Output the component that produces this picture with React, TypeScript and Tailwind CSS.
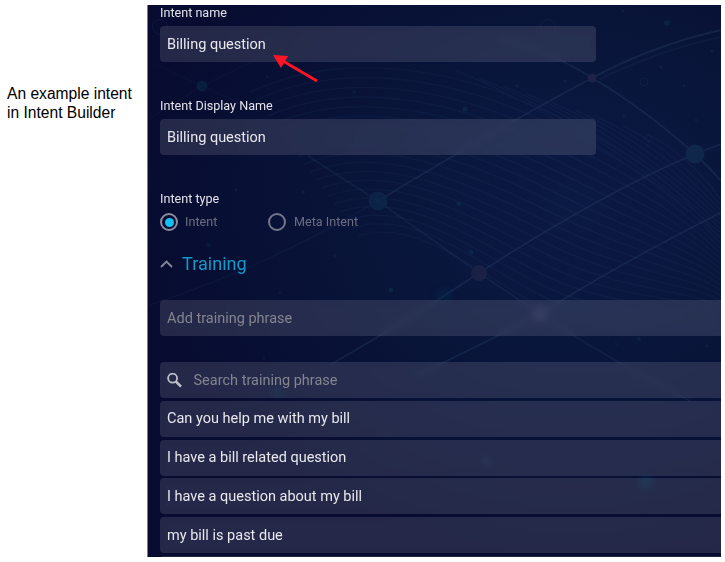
import React from 'react';

const waves = Array.from({ length: 19 }, (_, i) => i);

const dots: [number, number, number, string][] = [
  [667, 23, 3, '#0d5068'], [465, 109, 2.5, '#12506c'], [354, 92, 2, '#0d4058'],
  [661, 67, 1.5, '#284060'], [684, 86, 1.5, '#1e3c64'], [565, 81, 1.5, '#1e3c64'],
  [517, 86, 1.7, '#1e3c64'], [623, 11, 1.5, '#243a60'], [459, 204, 2.5, '#10506c'],
  [471, 252, 2.5, '#10506c'], [391, 290, 2.3, '#1c5570'], [209, 245, 2.3, '#0e3f5c'],
  [303, 192, 2, '#0e3f5c'], [236, 190, 1.7, '#0e3f5c'], [335, 256, 1.5, '#183460'],
  [280, 293, 1.5, '#183460'], [639, 339, 2, '#10506c'], [616, 344, 1.3, '#183f60'],
  [707, 346, 1.3, '#183f60'], [696, 120, 1.5, '#1c3d64'], [624, 116, 1.3, '#243d64'],
  [712, 51, 1.5, '#243d64'], [267, 77, 1.2, '#183f60'], [264, 358, 1.2, '#183f60'],
];

function Backdrop() {
  return (
    <svg className="absolute inset-0 h-full w-full" viewBox="148 5 573 552" preserveAspectRatio="none" fill="none" aria-hidden="true">
      <defs>
        <radialGradient id="glow" gradientUnits="userSpaceOnUse" cx="575" cy="205" r="400" gradientTransform="translate(575 205) scale(1.1 0.9) translate(-575 -205)">
          <stop offset="0" stopColor="#0b1a44" />
          <stop offset="0.45" stopColor="#09153a" />
          <stop offset="1" stopColor="#070c30" />
        </radialGradient>
        <filter id="soft" x="-100%" y="-100%" width="300%" height="300%"><feGaussianBlur stdDeviation="3" /></filter>
      </defs>
      <rect x="148" y="5" width="573" height="552" fill="url(#glow)" />
      <g stroke="#294a78" strokeWidth="1.4" opacity="0.12">
        {waves.map((i) => (
          <path key={i} d={`M ${250 + i * 6} ${92 + i * 8} C ${330 + i * 5} ${55 + i * 9}, ${440 + i * 2} ${58 + i * 12}, ${560 - i} ${118 + i * 10.5} S ${680 + i * 2} ${198 + i * 7}, 730 ${248 + i * 5}`} />
        ))}
        {waves.slice(0, 9).map((i) => (
          <path key={i} d={`M ${455 + i * 24} ${70 + i * 8} Q ${590 + i * 13} ${125 + i * 4}, 730 ${245 - i * 4}`} />
        ))}
      </g>
      <g stroke="#304a70" strokeWidth="1.8" opacity="0.3">
        <path d="M721 30Q654 45 592 78Q496 129 378 201" />
        <path d="M721 37Q660 50 600 79" opacity="0.5" />
        <path d="M500 38Q556 54 592 78Q642 107 695 154Q710 168 724 184" />
        <path d="M724 143L695 154Q604 192 479 273Q410 319 330 365" />
        <path d="M308 156L378 201L479 273L540 314Q600 354 690 401" opacity="0.7" />
        <path d="M724 211Q615 266 540 314Q487 342 415 376" />
        <path d="M378 201Q270 265 150 305" opacity="0.4" />
        <path d="M150 62L202 86L260 112M202 86L265 55M202 86L150 118" opacity="0.25" />
      </g>
      <circle cx="202" cy="86" r="5.5" fill="#0a2444" opacity="0.75" />
      <circle cx="378" cy="201" r="9.5" fill="#0c274a" opacity="0.8" />
      <circle cx="695" cy="154" r="9.5" fill="#0f274b" />
      <circle cx="479" cy="273" r="8" fill="#1b2146" />
      <circle cx="592" cy="78" r="4.5" fill="#1d2248" />
      <g filter="url(#soft)">
        <circle cx="540" cy="314" r="8" fill="#1d264d" />
        <circle cx="444" cy="295" r="8" fill="#0a2b50" opacity="0.3" />
        <circle cx="487" cy="461" r="6" fill="#12244a" opacity="0.5" />
        <circle cx="646" cy="482" r="7" fill="#0a2b4a" opacity="0.6" />
        <circle cx="278" cy="391" r="7" fill="#0a2343" opacity="0.4" />
      </g>
      <g stroke="#264168" strokeWidth="1" opacity="0.22">
        <circle cx="160" cy="27" r="7.5" />
        <circle cx="548" cy="27" r="7.5" />
        <circle cx="644" cy="82" r="4" />
        <circle cx="648" cy="138" r="3.5" />
      </g>
      {dots.map(([x, y, r, c]) => <circle key={`${x}-${y}`} cx={x} cy={y} r={r} fill={c} opacity="0.25" />)}
    </svg>
  );
}

const field = 'flex h-9 shrink-0 items-center bg-[#f5f0f5]/[0.125] pt-px pl-[7px] text-[14.5px] backdrop-blur-[3px]';
const label = 'h-[14px] shrink-0 text-[12.6px] leading-[14px] text-[#e2e2e9]';

const phrases = ['Can you help me with my bill', 'I have a bill related question', 'I have a question about my bill', 'my bill is past due'];

export default function App() {
  return (
    <main className="flex h-[562px] w-[725px] overflow-hidden bg-white">
      <aside className="w-[147px] shrink-0 pt-[84px] pl-[7px] font-['Liberation_Sans',Arial,sans-serif] text-[15.6px] leading-[19px] whitespace-nowrap text-black">
        <p>An example intent</p>
        <p>in Intent Builder</p>
      </aside>
      <section className="relative mt-[5px] h-[552px] w-[574px] overflow-hidden border-l border-[#777a96] bg-[#070b2f] font-[Roboto,sans-serif]">
        <Backdrop />
        <div className="relative flex flex-col pt-px pl-3">
          <div className={label}>Intent name</div>
          <div className={`${field} mt-[6px] w-[436px] rounded text-[#e8e8ed]`}>Billing question</div>
          <div className={`${label} mt-[37px]`}>Intent Display Name</div>
          <div className={`${field} mt-[6px] w-[436px] rounded text-[#e8e8ed]`}>Billing question</div>
          <div className={`${label} mt-[37px]`}>Intent type</div>
          <div className="mt-[7px] flex h-[18px] items-center text-[12.6px] text-[#6c6e83]">
            <span className="flex w-[108px] items-center gap-[7px]">
              <span className="flex size-[18px] items-center justify-center rounded-full border-2 border-[#8b8c9e]"><span className="size-[9px] rounded-full bg-[#16bff2]" /></span>
              Intent
            </span>
            <span className="flex items-center gap-2">
              <span className="size-[18px] rounded-full border-2 border-[#74768a]" />
              Meta Intent
            </span>
          </div>
          <div className="mt-[21px] flex h-6 items-center gap-[9px] text-[18.1px] leading-6 text-[#1797c8]">
            <svg className="h-2 w-[13px]" viewBox="0 0 13 8" fill="none" stroke="#85879a" strokeWidth="1.8"><path d="M1 7L6.5 1.5L12 7" /></svg>
            Training
          </div>
          <div className={`${field} mt-[24px] rounded-l text-[#85858f]`}>Add training phrase</div>
          <div className={`${field} mt-[26px] rounded-l text-[#85858f]`}>
            <svg className="mr-[11.5px] size-[15px]" viewBox="0 0 15 15" fill="none" stroke="#c1c1ca"><circle cx="5.6" cy="5.2" r="4.5" strokeWidth="1.8" /><path d="M9 8.6L14 13.6" strokeWidth="2.6" /></svg>
            Search training phrase
          </div>
          <div className="mt-[2.8px] flex flex-col gap-[2.8px]">
            {phrases.map((phrase) => <div key={phrase} className={`${field} rounded-l text-[#e8e8ed]`}>{phrase}</div>)}
            <div className={`${field} rounded-l`} />
          </div>
        </div>
        <svg className="absolute top-[48px] left-[124px] h-[30px] w-[48px]" viewBox="272 53 48 30" aria-hidden="true">
          <path d="M283 61L317 81" stroke="#ff1425" strokeWidth="2.7" />
          <path d="M273 55L288 56L281 68Z" fill="#ff1425" />
        </svg>
      </section>
    </main>
  );
}
